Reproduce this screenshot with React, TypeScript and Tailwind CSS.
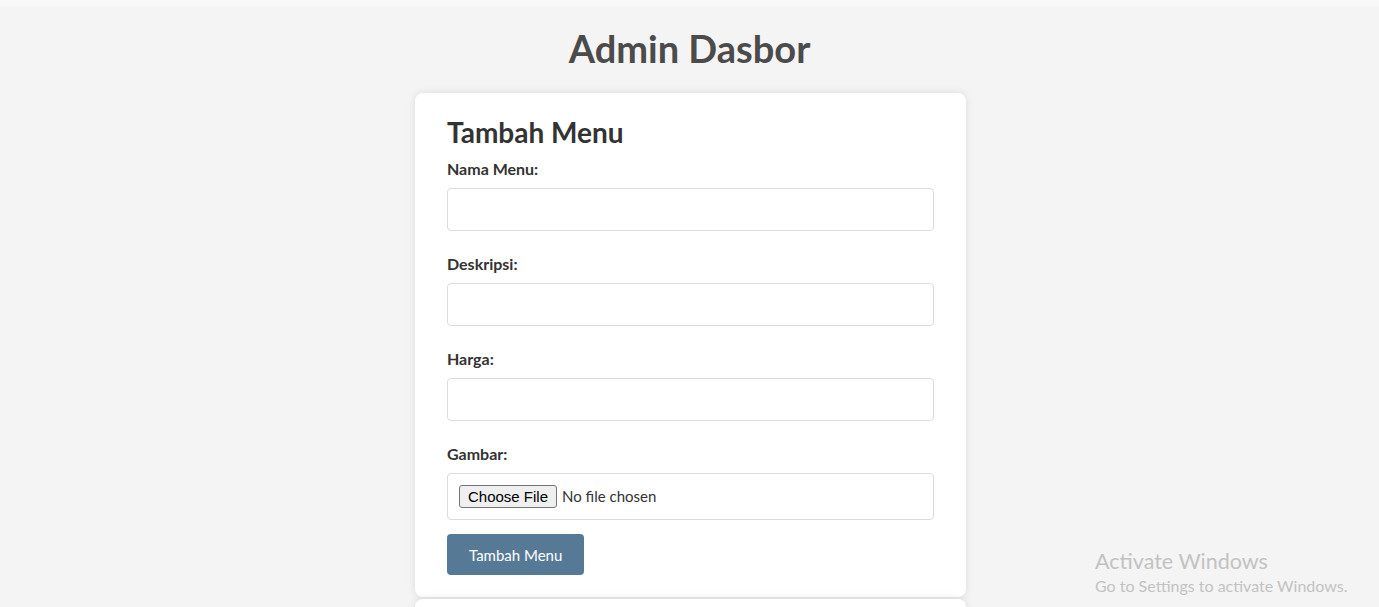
import React from 'react';

const Field: React.FC<{ label: string; children: React.ReactNode }> = ({ label, children }) => (
  <div className="mb-[23px]">
    <label className="block text-[16px] leading-[19px] font-bold text-[#333] mb-[10px]">{label}</label>
    {children}
  </div>
);

const inputCls = 'block w-full h-[43px] bg-white border border-[#dcdcdc] rounded-[4px] px-[10px] text-[16px] outline-none';

export default function App() {
  return (
    <div className="relative min-h-screen bg-[#f4f4f4] font-['Lato',sans-serif] overflow-hidden">
      <div className="h-[6px] bg-[#f8f8f8]" />
      <h1 className="mt-[24px] text-center text-[38px] leading-[37px] font-bold text-[#4b4b4b]">Admin Dasbor</h1>

      <div className="mx-auto mt-[26px] w-[551px] translate-x-[1px] bg-white rounded-[8px] shadow-[0_0_8px_rgba(0,0,0,0.1)] px-8 pt-[22px] pb-[22px]">
        <h2 className="text-[28px] leading-[34px] font-bold text-[#333] mb-[10px]">Tambah Menu</h2>
        <form onSubmit={(e) => e.preventDefault()}>
          <Field label="Nama Menu:">
            <input type="text" className={inputCls} />
          </Field>
          <Field label="Deskripsi:">
            <input type="text" className={inputCls} />
          </Field>
          <Field label="Harga:">
            <input type="text" className={inputCls} />
          </Field>
          <div className="mb-[14px]">
            <label className="block text-[16px] leading-[19px] font-bold text-[#333] mb-[10px]">Gambar:</label>
            <input
              type="file"
              className="block w-full h-[47px] bg-white border border-[#dcdcdc] rounded-[4px] px-[11px] text-[15px] text-[#333] file:font-['Liberation_Sans',sans-serif] file:text-[15px] file:text-black file:bg-[#efefef] file:border file:border-[#767676] file:rounded-[3px] file:px-[8px] file:h-[23px] file:mt-[11px] file:mr-[5px]"
            />
          </div>
          <button className="h-[41px] px-[22px] pt-[2px] rounded-[4px] bg-[#567a96] text-white text-[15px]">Tambah Menu</button>
        </form>
      </div>

      <div className="mx-auto mt-[2px] w-[551px] translate-x-[1px] h-[40px] bg-white rounded-[8px] shadow-[0_0_8px_rgba(0,0,0,0.1)]" />

      <div className="absolute left-[1095px] top-[547px] text-[#c2c2c2] pointer-events-none">
        <div className="text-[21.5px] leading-[28px]">Activate Windows</div>
        <div className="text-[16px] leading-[20px] mt-[1px]">Go to Settings to activate Windows.</div>
      </div>
    </div>
  );
}
